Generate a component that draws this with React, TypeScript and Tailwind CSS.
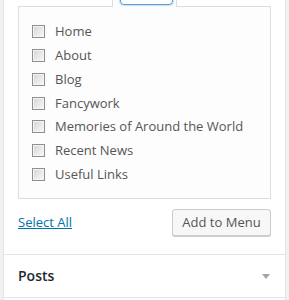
import React from 'react';

const pages: string[] = [
  'Home',
  'About',
  'Blog',
  'Fancywork',
  'Memories of Around the World',
  'Recent News',
  'Useful Links',
];

// old-style grey checkbox
const Check: React.FC = () => (
  <span className="w-[13px] h-[13px] shrink-0 border border-[#8f8f8f] bg-gradient-to-br from-[#d4d4d4] to-[#fbfbfb] shadow-[inset_0_0_0_1px_#f4f4f4]" />
);

const App: React.FC = () => {
  return (
    <div className="w-[289px] h-[300px] overflow-hidden bg-[#f1f1f1] flex font-['Open_Sans',sans-serif]">
      <div className="ml-[3px] w-[283px] h-full bg-white border-x border-[#e5e5e5] flex flex-col">
        {/* --- checklist panel --- */}
        <div className="px-[14px]">
          {/* tab strip (scrolled off top) */}
          <div className="flex h-[7px]">
            <div className="w-[94px] border-b border-[#dddddd]" />
            <div className="relative w-[65px] bg-[#fdfdfd] border-x border-[#dddddd] overflow-hidden">
              <div className="absolute left-[7px] right-[3px] bottom-[2px] h-[20px] rounded-sm border border-[#5b9dd9] shadow-[0_0_2px_rgba(30,140,190,0.8)]" />
            </div>
            <div className="flex-1 border-b border-[#dddddd]" />
          </div>

          <ul className="h-[192px] bg-[#fdfdfd] border-x border-b border-[#dddddd] pt-[13px] pl-[13px]">
            {pages.map((p) => (
              <li key={p} className="h-[23.75px] flex items-center gap-[10px] text-[13px] text-[#555555]">
                <Check />
                <span className="leading-none">{p}</span>
              </li>
            ))}
          </ul>

          {/* --- controls --- */}
          <div className="mt-[10px] mb-[18px] flex items-center justify-between">
            <a href="#" className="text-[13px] text-[#0073aa] underline leading-none">Select All</a>
            <button className="w-[99px] h-[27px] rounded-[3px] border border-[#cccccc] bg-[#f7f7f7] shadow-[0_1px_0_#cccccc] text-[13px] text-[#555555] leading-none">
              Add to Menu
            </button>
          </div>
        </div>

        {/* --- Posts accordion --- */}
        <div className="h-[44px] border-y border-[#e5e5e5] flex items-center justify-between pl-[14px] pr-[15px]">
          <h3 className="text-[14px] font-semibold text-[#23282d] leading-none">Posts</h3>
          <svg width="8" height="5" viewBox="0 0 8 5" className="block">
            <path d="M0 0H8L4 5Z" fill="#a0a5aa" />
          </svg>
        </div>
      </div>
    </div>
  );
};

export default App;
